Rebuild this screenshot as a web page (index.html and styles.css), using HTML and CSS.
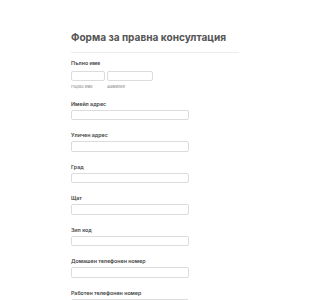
FILE: index.html
```html
<!DOCTYPE html>
<html lang="bg">
<head>
<meta charset="utf-8">
<link rel="stylesheet" href="styles.css">
</head>
<body>
<div class="form">
  <h1 class="title">Форма за правна консултация</h1>
  <div class="divider"></div>
  <div class="field name-field">
    <div class="label">Пълно име</div>
    <div class="name-row">
      <div class="name-col first">
        <div class="input"></div>
        <div class="sub">Първо име</div>
      </div>
      <div class="name-col last">
        <div class="input"></div>
        <div class="sub">Фамилия</div>
      </div>
    </div>
  </div>
  <div class="field"><div class="label">Имейл адрес</div><div class="input wide"></div></div>
  <div class="field"><div class="label">Уличен адрес</div><div class="input wide"></div></div>
  <div class="field"><div class="label">Град</div><div class="input wide"></div></div>
  <div class="field"><div class="label">Щат</div><div class="input wide"></div></div>
  <div class="field"><div class="label">Зип код</div><div class="input wide"></div></div>
  <div class="field"><div class="label">Домашен телефонен номер</div><div class="input wide"></div></div>
  <div class="field"><div class="label">Работен телефонен номер</div><div class="input wide"></div></div>
</div>
</body>
</html>
```
FILE: styles.css
```css
html, body {
  margin: 0;
  padding: 0;
  background: #ffffff;
  overflow: hidden;
}
body {
  font-family: Inter, "Noto Sans", sans-serif;
  color: #2c3345;
}
.form {
  padding: 31px 0 0 71px;
  width: 168px;
}
.title {
  margin: 0;
  font-size: 10.1px;
  line-height: 13px;
  font-weight: 700;
  color: #555555;
  white-space: nowrap;
}
.divider {
  margin-top: 8px;
  height: 1px;
  background: #ececec;
}
.field {
  margin-top: 12px;
}
.name-field {
  margin-top: 6.5px;
}
.label {
  font-size: 5.3px;
  line-height: 7px;
  font-weight: 600;
  color: #444;
  white-space: nowrap;
}
.name-row {
  display: flex;
  gap: 2px;
  margin-top: 4px;
}
.name-col.first { width: 34px; }
.name-col.last { width: 46px; }
.input {
  box-sizing: border-box;
  height: 10.5px;
  border: 1px solid #dcdcdc;
  border-radius: 2px;
  background: #fff;
}
.wide {
  width: 117.5px;
  margin-top: 2px;
}
.sub {
  margin-top: 2.5px;
  font-size: 4px;
  line-height: 5px;
  color: #888;
  white-space: nowrap;
}
```
